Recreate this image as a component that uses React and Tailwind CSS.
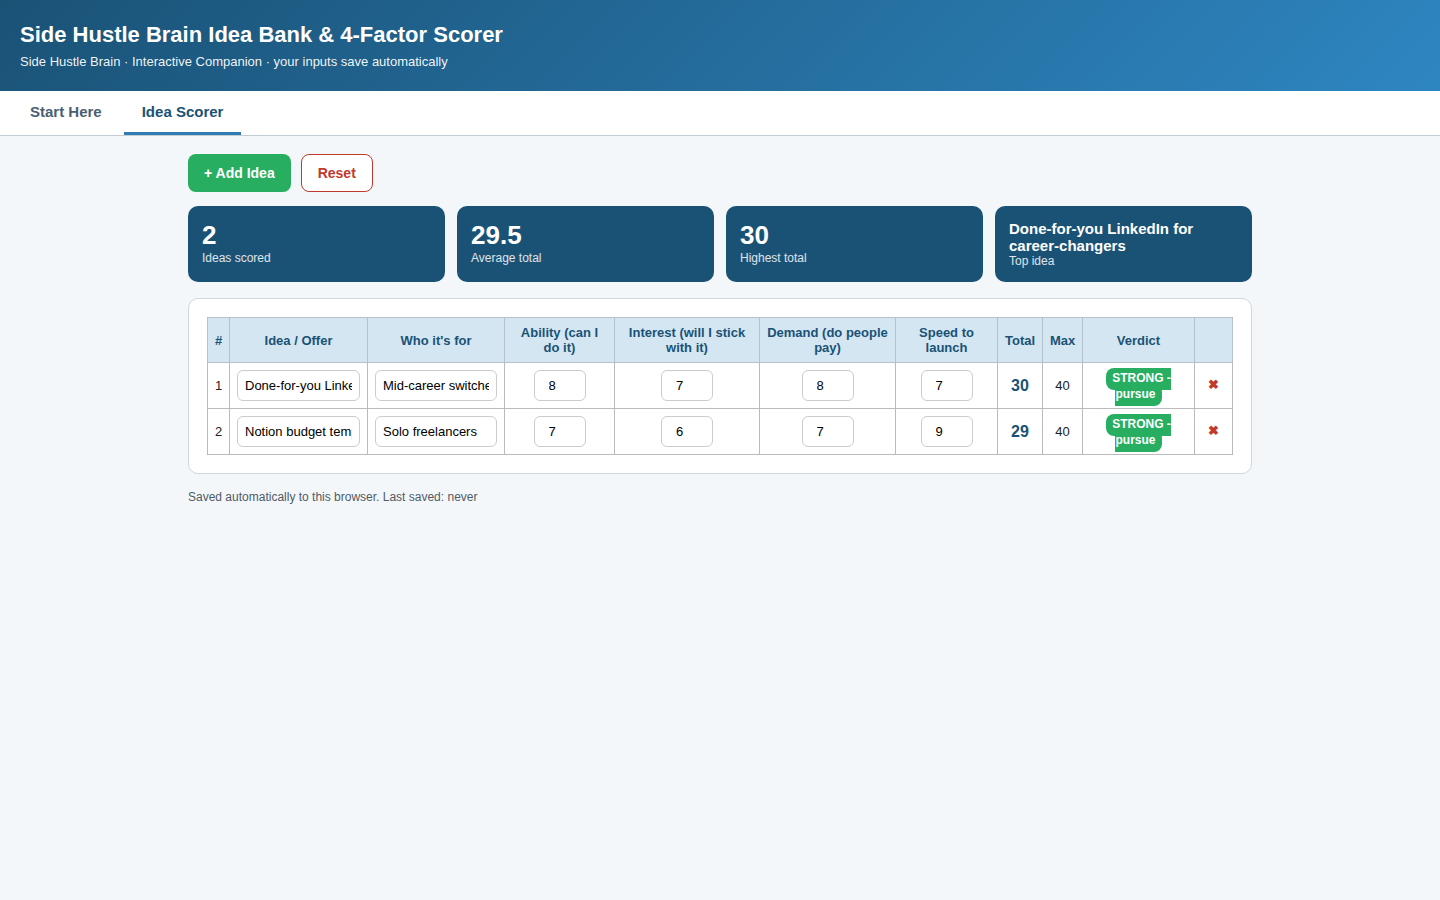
const ideas = [
  { id: 1, idea: "Done-for-you LinkedIn for career-changers", who: "Mid-career switchers", ability: 8, interest: 7, demand: 8, speed: 7, total: 30 },
  { id: 2, idea: "Notion budget templates", who: "Solo freelancers", ability: 7, interest: 6, demand: 7, speed: 9, total: 29 },
]

const stats = [
  { value: "2", label: "Ideas scored" },
  { value: "29.5", label: "Average total" },
  { value: "30", label: "Highest total" },
]

const headers = [
  "#",
  "Idea / Offer",
  "Who it's for",
  "Ability (can I do it)",
  "Interest (will I stick with it)",
  "Demand (do people pay)",
  "Speed to launch",
  "Total",
  "Max",
  "Verdict",
  "",
]

const colWidths = ["w-[22px]", "w-[138px]", "w-[137px]", "w-[110px]", "w-[145px]", "w-[136px]", "w-[102px]", "w-[45px]", "w-[40px]", "w-[112px]", "w-[38px]"]

function TextCell({ value }) {
  return (
    <td className="border border-[#bbbbbb] px-[7px] py-[7px] text-center">
      <input
        defaultValue={value}
        className="h-[31px] w-full rounded-md border border-[#cccccc] bg-white px-[7px] text-[13px] text-black outline-none"
      />
    </td>
  )
}

function ScoreCell({ value }) {
  return (
    <td className="border border-[#bbbbbb] px-[7px] py-[7px] text-center">
      <input
        defaultValue={value}
        className="h-[31px] w-[52px] rounded-md border border-[#cccccc] bg-white px-[14px] text-[13px] text-black outline-none"
      />
    </td>
  )
}

export default function App() {
  return (
    <div className="min-h-screen bg-[#f4f7fa] font-['Liberation_Sans',Arial,sans-serif] text-[#222222]">

      {/* Header */}
      <header className="h-[91px] bg-linear-[135deg] from-[#1a5276] to-[#2e86c1] px-5 pt-[21px] text-white">
        <h1 className="text-[22px] font-bold leading-[28px]">
          Side Hustle Brain Idea Bank &amp; 4-Factor Scorer
        </h1>
        <p className="mt-[3px] text-[13px] leading-[20px] text-white/95">
          Side Hustle Brain · Interactive Companion · your inputs save automatically
        </p>
      </header>

      {/* Tabs */}
      <nav className="flex h-[45px] border-b border-[#c4ccd4] bg-white pl-3">
        <button className="h-[44px] border-b-[3px] border-transparent px-[18px] pt-[2px] text-[15px] font-bold text-[#4a5f73]">Start Here</button>
        <button className="ml-[4px] h-[44px] border-b-[3px] border-[#2e7eb5] px-[18px] pt-[2px] text-[15px] font-bold text-[#1a5276]">
          Idea Scorer
        </button>
      </nav>

      <main className="mx-auto w-[1064px] pt-[18px]">

        {/* Actions */}
        <div className="flex gap-[10px]">
          <button className="h-[38px] rounded-lg bg-[#27ae60] px-4 text-sm font-bold text-white">+ Add Idea</button>
          <button className="h-[38px] rounded-lg border border-[#c0392b] bg-white px-4 text-sm font-bold text-[#c0392b]">Reset</button>
        </div>

        {/* Stats */}
        <div className="mt-[14px] grid grid-cols-4 gap-3">
          {stats.map((s) => (
            <div key={s.label} className="h-[76px] rounded-[10px] bg-[#1a5276] px-[14px] pt-[14px] text-white">
              <div className="text-[26px] font-bold leading-[30px]">{s.value}</div>
              <div className="mt-px text-xs leading-[14px] text-white/85">{s.label}</div>
            </div>
          ))}
          <div className="h-[76px] rounded-[10px] bg-[#1a5276] px-[14px] pt-[14px] text-white">
            <div className="text-[15px] font-bold leading-[17px]">Done-for-you LinkedIn for career-changers</div>
            <div className="text-xs leading-[14px] text-white/85">Top idea</div>
          </div>
        </div>

        {/* Table card */}
        <div className="mt-4 rounded-[10px] border border-[#d0d7de] bg-white px-[18px] py-[18px]">
          <table className="w-[1026px] table-fixed border-collapse text-[13px]">
            <colgroup>
              {colWidths.map((w, i) => (
                <col key={i} className={w} />
              ))}
            </colgroup>
            <thead>
              <tr className="h-[45px] bg-[#d4e6f1]">
                {headers.map((h, i) => (
                  <th key={i} className="border border-[#b5c1cc] px-[7px] text-center text-[13px] font-bold leading-[15px] text-[#1a5276]">
                    {h}
                  </th>
                ))}
              </tr>
            </thead>
            <tbody>
              {ideas.map((row) => (
                <tr key={row.id} className="h-[46px]">
                  <td className="border border-[#bbbbbb] text-center">{row.id}</td>
                  <TextCell value={row.idea} />
                  <TextCell value={row.who} />
                  <ScoreCell value={row.ability} />
                  <ScoreCell value={row.interest} />
                  <ScoreCell value={row.demand} />
                  <ScoreCell value={row.speed} />
                  <td className="border border-[#bbbbbb] text-center text-base font-bold text-[#1a5276]">{row.total}</td>
                  <td className="border border-[#bbbbbb] text-center">40</td>
                  <td className="border border-[#bbbbbb] px-2 pt-[1px] text-center leading-[15px]">
                    <span className="rounded-lg bg-[#27ae60] px-[6px] pt-[3px] pb-[5px] text-xs font-bold text-white">STRONG - pursue</span>
                  </td>
                  <td className="border border-[#bbbbbb] pb-[2px] text-center">
                    <button className="text-[13px] font-bold leading-none text-[#c0392b]">✖</button>
                  </td>
                </tr>
              ))}
            </tbody>
          </table>
        </div>

        <p className="mt-[15px] text-xs leading-[16px] text-[#4f5b66]">
          Saved automatically to this browser. Last saved: never
        </p>
      </main>
    </div>
  )
}
